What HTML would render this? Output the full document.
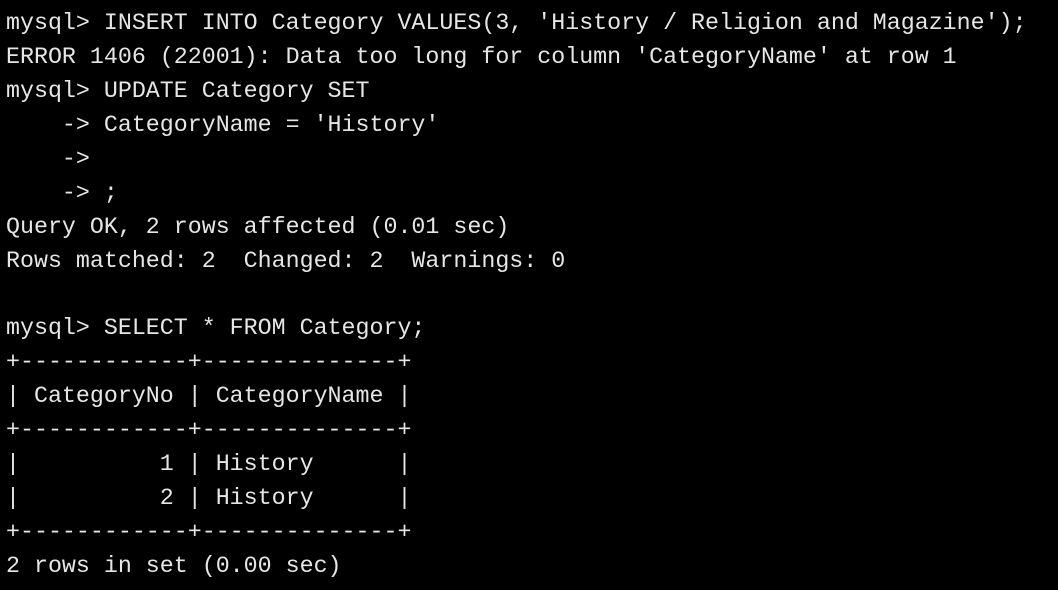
<!DOCTYPE html>
<html><head><meta charset="utf-8"><style>
html,body{margin:0;padding:0;background:#000;width:1058px;height:590px;overflow:hidden}
pre{margin:0;position:absolute;left:6px;top:7px;font-family:"Liberation Mono",monospace;font-size:23.3px;line-height:33.94px;color:#e6e6e6;white-space:pre}
</style></head><body><pre>mysql&gt; INSERT INTO Category VALUES(3, 'History / Religion and Magazine');
ERROR 1406 (22001): Data too long for column 'CategoryName' at row 1
mysql&gt; UPDATE Category SET
    -&gt; CategoryName = 'History'
    -&gt;
    -&gt; ;
Query OK, 2 rows affected (0.01 sec)
Rows matched: 2  Changed: 2  Warnings: 0

mysql&gt; SELECT * FROM Category;
+------------+--------------+
| CategoryNo | CategoryName |
+------------+--------------+
|          1 | History      |
|          2 | History      |
+------------+--------------+
2 rows in set (0.00 sec)</pre></body></html>
